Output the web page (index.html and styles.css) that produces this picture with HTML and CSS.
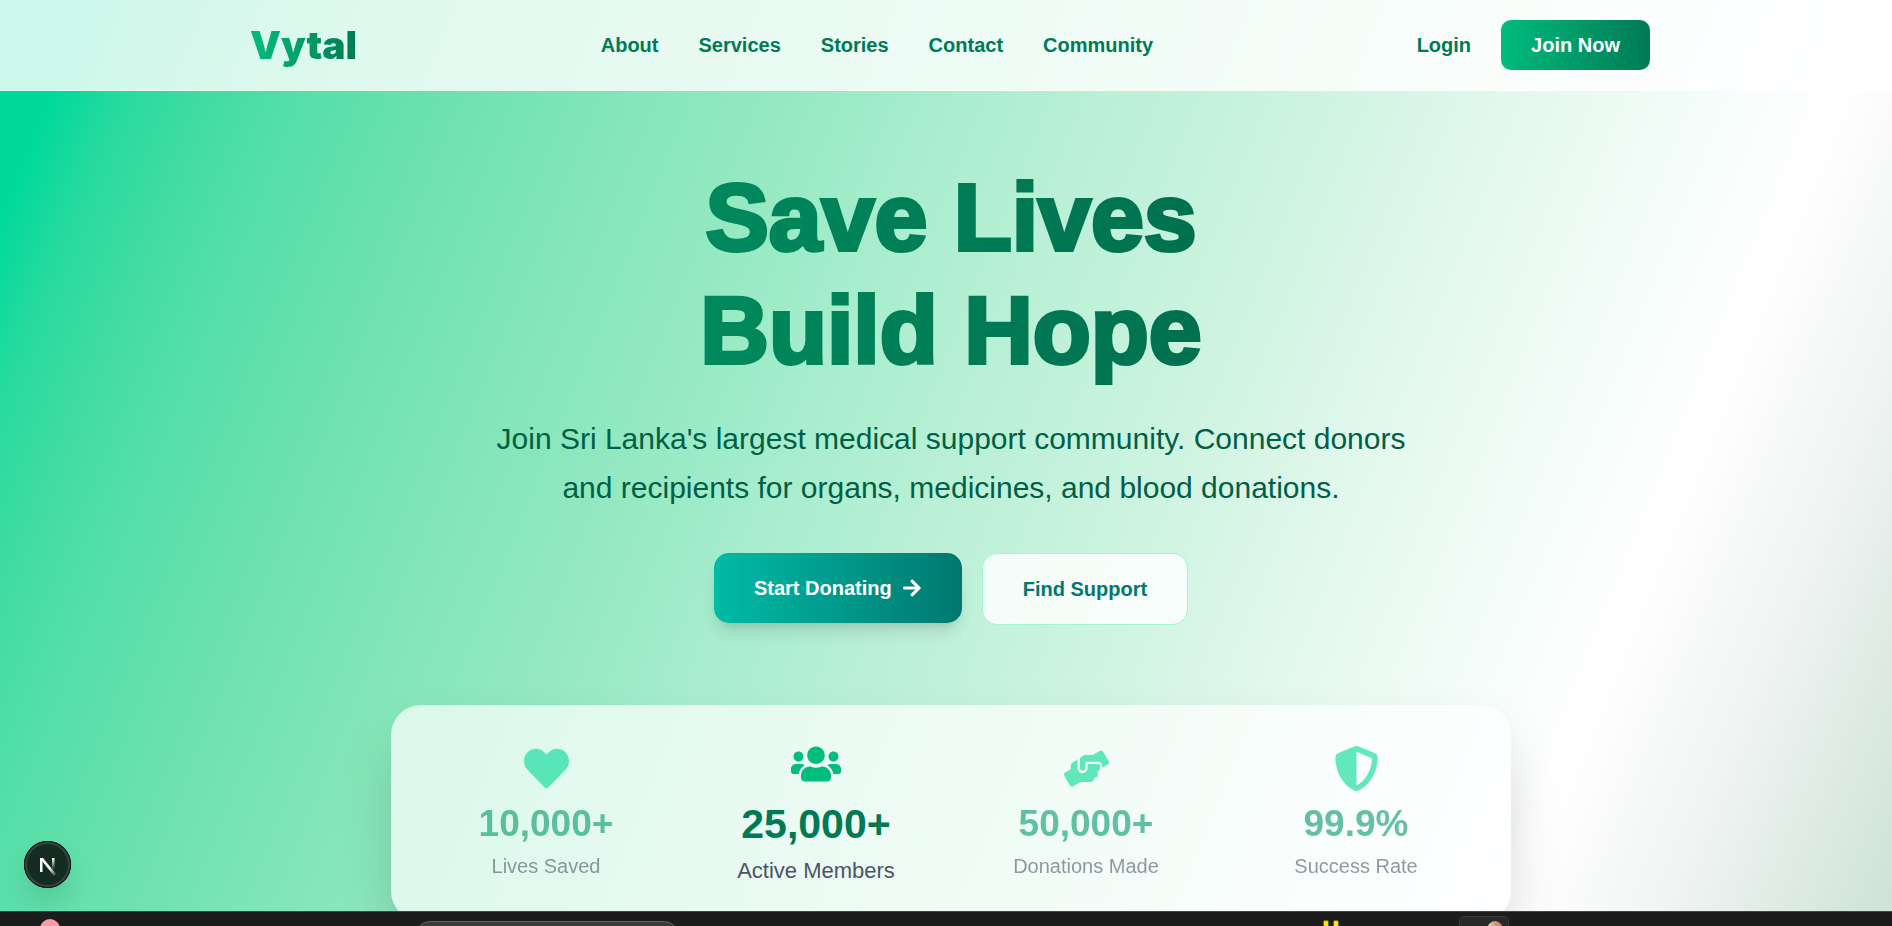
FILE: index.html
```html
<!DOCTYPE html>
<html lang="en">
<head>
<meta charset="utf-8">
<title>Vytal</title>
<link rel="stylesheet" href="styles.css">
</head>
<body>
<div class="page">
  <header class="header">
    <div class="header-inner">
      <a class="logo" href="#">Vytal</a>
      <nav class="nav">
        <a href="#">About</a>
        <a href="#">Services</a>
        <a href="#">Stories</a>
        <a href="#">Contact</a>
        <a href="#">Community</a>
      </nav>
      <div class="actions">
        <a class="login" href="#">Login</a>
        <button class="join" type="button">Join Now</button>
      </div>
    </div>
  </header>
  <main class="hero">
    <h1 class="title">Save Lives<br>Build Hope</h1>
    <p class="lead">Join Sri Lanka's largest medical support community. Connect donors and recipients for organs, medicines, and blood donations.</p>
    <div class="cta">
      <button class="btn btn-primary" type="button">Start Donating
        <svg class="arrow" viewBox="0 0 448 512" aria-hidden="true"><path d="M190.5 66.9l22.2-22.2c9.4-9.4 24.6-9.4 33.9 0L441 239c9.4 9.4 9.4 24.6 0 33.9L246.6 467.3c-9.4 9.4-24.6 9.4-33.9 0l-22.2-22.2c-9.5-9.5-9.3-25 .4-34.3L311.4 296H24c-13.3 0-24-10.7-24-24v-32c0-13.3 10.7-24 24-24h287.4L190.9 101.2c-9.8-9.3-10-24.8-.4-34.3z"/></svg>
      </button>
      <button class="btn btn-secondary" type="button">Find Support</button>
    </div>
    <section class="stats">
      <div class="stat">
        <svg class="stat-icon" viewBox="0 0 512 512" aria-hidden="true"><path d="M462.3 62.6C407.5 15.9 326 24.3 275.7 76.2L256 96.5l-19.7-20.3C186.1 24.3 104.5 15.9 49.7 62.6c-62.8 53.6-66.1 149.8-9.9 207.9l193.5 199.8c12.5 12.9 32.8 12.9 45.3 0l193.5-199.8c56.3-58.1 53-154.3-9.8-207.9z"/></svg>
        <div class="stat-value">10,000+</div>
        <div class="stat-label">Lives Saved</div>
      </div>
      <div class="stat stat-active">
        <svg class="stat-icon" viewBox="0 0 640 512" aria-hidden="true"><path d="M96 224c35.3 0 64-28.7 64-64s-28.7-64-64-64-64 28.7-64 64 28.7 64 64 64zm448 0c35.3 0 64-28.7 64-64s-28.7-64-64-64-64 28.7-64 64 28.7 64 64 64zm32 32h-64c-17.6 0-33.5 7.1-45.1 18.6 40.3 22.1 68.9 62 75.1 109.4h66c17.7 0 32-14.3 32-32v-32c0-35.3-28.7-64-64-64zm-256 0c61.9 0 112-50.1 112-112S381.9 32 320 32 208 82.1 208 144s50.1 112 112 112zm76.8 32h-8.3c-20.8 10-43.9 16-68.5 16s-47.6-6-68.5-16h-8.3C179.6 288 128 339.6 128 403.2V432c0 26.5 21.5 48 48 48h288c26.5 0 48-21.5 48-48v-28.8c0-63.6-51.6-115.2-115.2-115.2zm-223.7-13.4C161.5 263.1 145.6 256 128 256H64c-35.3 0-64 28.7-64 64v32c0 17.7 14.3 32 32 32h65.9c6.3-47.4 34.9-87.3 75.2-109.4z"/></svg>
        <div class="stat-value">25,000+</div>
        <div class="stat-label">Active Members</div>
      </div>
      <div class="stat">
        <svg class="stat-icon" viewBox="0 0 640 512" aria-hidden="true"><path d="M488 192H336v56c0 39.7-32.3 72-72 72s-72-32.3-72-72V126.4l-64.9 39C107.8 176.9 96 197.8 96 220.2v47.3l-80 46.2C.7 322.5-4.6 342.1 4.3 357.4l80 138.6c8.8 15.3 28.4 20.5 43.7 11.7L231.4 448H368c35.3 0 64-28.7 64-64h16c17.7 0 32-14.3 32-32v-64h8c13.3 0 24-10.7 24-24v-48c0-13.3-10.7-24-24-24zm147.7-37.4L555.7 16C546.9.7 527.3-4.5 512 4.3L408.6 64H306.4c-12 0-23.7 3.4-33.9 9.7L239 94.6c-9.4 5.8-15 16.1-15 27.1V248c0 22.1 17.9 40 40 40s40-17.9 40-40v-88h184c30.9 0 56 25.1 56 56v28.5l80-46.2c15.3-8.9 20.5-28.4 11.7-43.7z"/></svg>
        <div class="stat-value">50,000+</div>
        <div class="stat-label">Donations Made</div>
      </div>
      <div class="stat">
        <svg class="stat-icon" viewBox="0 0 512 512" aria-hidden="true"><path d="M466.5 83.7l-192-80a48.15 48.15 0 0 0-36.9 0l-192 80C27.7 91.1 16 108.6 16 128c0 198.5 114.5 335.7 221.5 380.3 11.8 4.9 25.1 4.9 36.9 0C360.1 472.6 496 349.3 496 128c0-19.4-11.7-36.9-29.5-44.3zM256.1 446.3l-.1-381 175.9 73.3c-3.3 151.4-82.1 261.1-175.8 307.7z"/></svg>
        <div class="stat-value">99.9%</div>
        <div class="stat-label">Success Rate</div>
      </div>
    </section>
  </main>
  <button class="dev-badge" type="button" aria-label="Open dev tools">
    <svg viewBox="0 0 47 47" aria-hidden="true">
      <defs>
        <linearGradient id="fade-diagonal" x1="26" y1="27" x2="32" y2="36" gradientUnits="userSpaceOnUse"><stop stop-color="#fff"/><stop offset="1" stop-color="#fff" stop-opacity="0"/></linearGradient>
        <linearGradient id="fade-stem" x1="0" y1="17" x2="0" y2="29" gradientUnits="userSpaceOnUse"><stop stop-color="#fff"/><stop offset="1" stop-color="#fff" stop-opacity="0"/></linearGradient>
      </defs>
      <path d="M16 17h3l13 16-2 2-11.500-14.500V31H16z" fill="url(#fade-diagonal)"/>
      <path d="M28 17h2.500v12H28z" fill="url(#fade-stem)"/>
    </svg>
  </button>
</div>
<footer class="taskbar">
  <span class="task-dot"></span>
  <span class="task-search"></span>
  <span class="task-marks"><i></i><i></i></span>
  <span class="task-tile"><i></i></span>
  <time class="task-clock">11:44 PM</time>
</footer>
</body>
</html>
```
FILE: styles.css
```css
* { box-sizing: border-box; }

body {
  margin: 0;
  height: 100vh;
  overflow: hidden;
  display: flex;
  flex-direction: column;
  font-family: "Liberation Sans", Arial, sans-serif;
  font-size: 20px;
  line-height: 30px;
}

a { color: inherit; text-decoration: none; }

button {
  font: inherit;
  font-weight: 700;
  border: 0;
  cursor: pointer;
}

.page {
  position: relative;
  flex: 1;
  min-height: 0;
  overflow: hidden;
  background: linear-gradient(112deg, #00d899 0%, #00d99b 4%, #26da9e 7%, #42dca3 11%, #55dfa9 15%, #6be1ae 21%, #85e6b9 30%, #96e9c3 37%, #a7edce 43%, #bbf0d7 51%, #c9f3de 58%, #daf6e8 65%, #eefbf5 74%, #ffffff 83%, #f0f4f2 90%, #cde2d8 100%);
}

.header {
  background: rgba(255, 255, 255, 0.8);
  border-bottom: 1px solid rgba(255, 255, 255, 0.3);
  padding: 20px 0 20px 8px;
}

.header-inner {
  max-width: 1400px;
  margin: 0 auto;
  display: flex;
  align-items: center;
  justify-content: space-between;
  font-weight: 700;
  color: #007a55;
}

.logo {
  font-family: Inter, "Liberation Sans", sans-serif;
  font-size: 39px;
  font-weight: 900;
  line-height: 48px;
  background: linear-gradient(to right, #00bc7d, #007a55);
  -webkit-background-clip: text;
  background-clip: text;
  color: transparent;
}

.nav { display: flex; gap: 40px; }

.actions { display: flex; align-items: center; gap: 10px; }

.login { padding: 10px 20px; }

.join {
  padding: 10px 30px;
  border-radius: 10px;
  color: #fff;
  background: linear-gradient(to right, #00bc7d, #007a55);
}

.hero {
  display: flex;
  flex-direction: column;
  align-items: center;
  padding: 70px 0 0 10px;
  text-align: center;
}

.title {
  width: 100%;
  max-width: 1120px;
  margin: 0 0 27px;
  font-size: 95px;
  font-weight: 900;
  line-height: 113px;
  -webkit-text-stroke: 4px transparent;
  background: linear-gradient(to right, #009966, #006045);
  -webkit-background-clip: text;
  background-clip: text;
  color: transparent;
}

.lead {
  max-width: 940px;
  margin: 0 0 41px;
  font-size: 30px;
  line-height: 49px;
  color: #006045;
}

.cta {
  display: flex;
  align-items: flex-start;
  gap: 20px;
  margin-bottom: 80px;
}

.btn {
  display: flex;
  align-items: center;
  gap: 10px;
  padding: 20px 40px;
  border-radius: 15px;
}

.btn-primary {
  color: #fff;
  background: linear-gradient(to right, #00bba7, #00786f);
  box-shadow: 0 12px 18px -4px rgba(0, 0, 0, 0.12), 0 5px 8px -5px rgba(0, 0, 0, 0.12);
}

.btn-secondary {
  color: #00786f;
  background: rgba(255, 255, 255, 0.82);
  border: 1px solid #a4f4cf;
}

.arrow { width: 20px; height: 20px; fill: currentColor; }

.stats {
  width: 100%;
  max-width: 1120px;
  display: grid;
  grid-template-columns: repeat(4, 1fr);
  gap: 40px;
  align-items: center;
  padding: 34px 40px;
  border-radius: 30px;
  background: rgba(255, 255, 255, 0.7);
  box-shadow: 0 31px 62px -15px rgba(0, 0, 0, 0.25);
}

.stat {
  display: flex;
  flex-direction: column;
  align-items: center;
  opacity: 0.6;
  white-space: nowrap;
}

.stat-icon {
  width: 45px;
  height: 45px;
  margin-bottom: 10px;
  fill: #00d894;
}

.stat-value {
  font-size: 37px;
  font-weight: 700;
  line-height: 45px;
  margin-bottom: 5px;
  color: #009966;
}

.stat-label { color: #4a5565; }

.stat-active { opacity: 1; }
.stat-active .stat-icon { width: 50px; height: 50px; fill: #00bc7d; }
.stat-active .stat-value { font-size: 41px; line-height: 50px; color: #007a55; }
.stat-active .stat-label { font-size: 22px; line-height: 33px; }

.dev-badge {
  position: absolute;
  left: 24px;
  bottom: 23px;
  width: 47px;
  height: 47px;
  padding: 0;
  border-radius: 50%;
  background: #152c22;
  box-shadow: inset 0 0 0 1px #10140f, inset 0 0 0 3px #33473f, 0 16px 32px -8px rgba(0, 0, 0, 0.24);
}

.dev-badge svg { display: block; width: 47px; height: 47px; }

.taskbar {
  height: 15px;
  overflow: hidden;
  display: flex;
  align-items: flex-start;
  padding: 0 26px 0 40px;
  background: #1c1c1c;
  border-top: 1px solid #454545;
}

.task-dot {
  width: 20px;
  height: 20px;
  margin-top: 7px;
  border-radius: 50%;
  background: #ff9aa5;
}

.task-search {
  width: 264px;
  height: 40px;
  margin: 9px 0 0 355px;
  border: 1px solid #646464;
  border-radius: 15px;
  background: #3a3a3a;
}

.task-marks {
  display: flex;
  gap: 4px;
  margin: 8px 120px 0 auto;
}

.task-marks i {
  width: 6px;
  height: 12px;
  border: 1px solid #6a6420;
  border-radius: 2px;
  background: #ffe600;
}

.task-tile {
  width: 50px;
  height: 40px;
  padding: 4px 5px 0 27px;
  margin: 4px 294px 0 0;
  border: 1px solid #383838;
  border-radius: 5px;
  background: #292929;
}

.task-tile i {
  display: block;
  height: 18px;
  border-radius: 50%;
  background: linear-gradient(to right, #e8dccb, #c99c74 50%, #d07a5c);
}

.task-clock {
  margin-top: 9px;
  font-size: 15px;
  line-height: 20px;
  color: #fff;
}
```
